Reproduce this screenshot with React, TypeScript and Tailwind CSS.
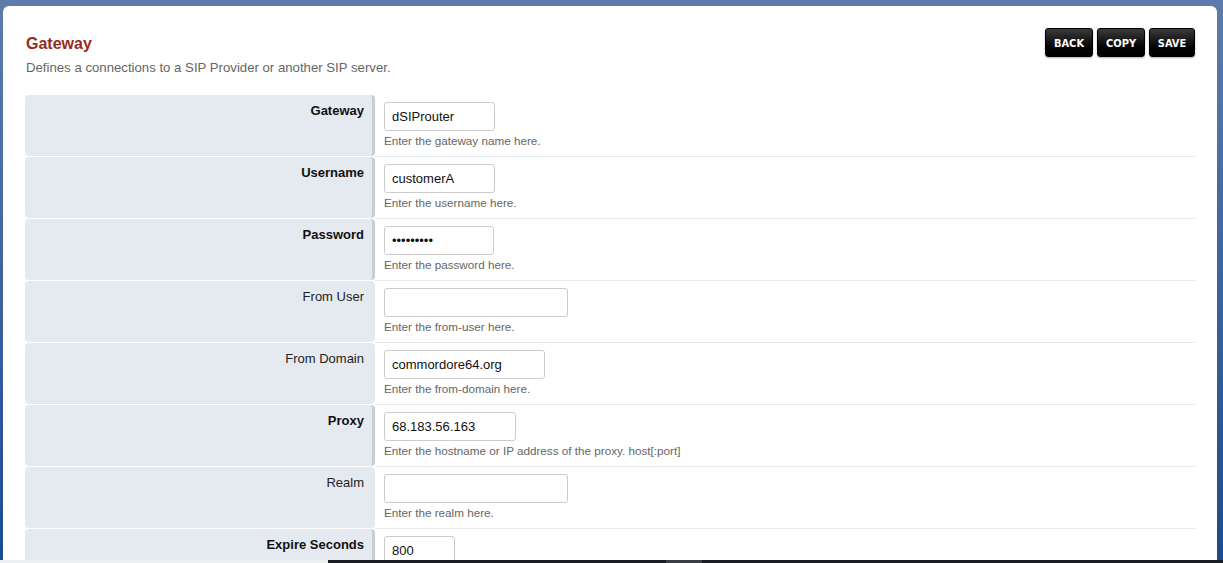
import React from "react";

type Row = {
  label: string;
  required: boolean;
  value: string;
  width: number;
  help: string;
  type?: string;
};

const rows: Row[] = [
  { label: "Gateway", required: true, value: "dSIProuter", width: 111, help: "Enter the gateway name here." },
  { label: "Username", required: true, value: "customerA", width: 111, help: "Enter the username here." },
  { label: "Password", required: true, value: "123456789", width: 110, help: "Enter the password here.", type: "password" },
  { label: "From User", required: false, value: "", width: 184, help: "Enter the from-user here." },
  { label: "From Domain", required: false, value: "commordore64.org", width: 161, help: "Enter the from-domain here." },
  { label: "Proxy", required: true, value: "68.183.56.163", width: 132, help: "Enter the hostname or IP address of the proxy. host[:port]" },
  { label: "Realm", required: false, value: "", width: 184, help: "Enter the realm here." },
  { label: "Expire Seconds", required: true, value: "800", width: 71, help: "" },
];

function Btn({ children, w }: { children: React.ReactNode; w: string }) {
  return (
    <button
      className={`${w} h-[29px] pt-[3px] rounded-[3px] border border-black bg-gradient-to-b from-[#3c3c3c] to-[#000000] text-white text-[11px] font-bold shadow-[0_1px_2px_rgba(0,0,0,0.3)]`}
      style={{ fontFamily: '"DejaVu Sans Condensed", "Liberation Sans", sans-serif' }}
    >
      {children}
    </button>
  );
}

export default function App() {
  return (
    <div
      className="w-[1223px] h-[563px] flex flex-col overflow-hidden bg-gradient-to-b from-[#5d7cac] via-[#3e63a0] to-[#1d4a8e]"
      style={{ fontFamily: '"Liberation Sans", Arial, sans-serif' }}
    >
      <div className="flex-1 min-h-0 pt-[6px] pl-[3px] pr-[6px] overflow-hidden">
        <div className="h-full bg-white rounded-t-[6px] px-[22px] pt-[22px] overflow-hidden">
          <div className="flex justify-between items-start">
            <div className="pt-[6px] pl-[1px]">
              <div className="text-[16px] leading-[19px] font-bold text-[#982a1e]">Gateway</div>
              <div className="mt-[7px] text-[13.2px] leading-[16px] text-[#666666]">
                Defines a connections to a SIP Provider or another SIP server.
              </div>
            </div>
            <div className="flex gap-[4px]">
              <Btn w="w-[48px]">BACK</Btn>
              <Btn w="w-[48px]">COPY</Btn>
              <Btn w="w-[46px]">SAVE</Btn>
            </div>
          </div>

          <div className="mt-[19px] flex flex-col">
            {rows.map((r) => (
              <div key={r.label} className="flex h-[62px]">
                <div
                  className={`w-[350px] h-[61px] shrink-0 bg-[#e5e9f0] rounded-[4px] border-r-[3px] ${
                    r.required ? "border-[#c8ccd3] font-bold text-[#111111]" : "border-[#e5e9f0] text-[#222222]"
                  } text-right pr-[8px] pt-[8px] text-[13px] leading-[16px]`}
                >
                  {r.label}
                </div>
                <div className="flex-1 border-b border-[#e5e9f0] pl-[9px] pt-[7px]">
                  <input
                    type={r.type ?? "text"}
                    defaultValue={r.value}
                    readOnly
                    className="h-[29px] border border-[#cccccc] rounded-[3px] px-[7px] text-[13px] text-[#111111] outline-none bg-white"
                    style={{ width: r.width, fontFamily: '"Liberation Sans", Arial, sans-serif' }}
                  />
                  {r.help && (
                    <div className="mt-[3px] text-[11.7px] leading-[14px] text-[#666666]">{r.help}</div>
                  )}
                </div>
              </div>
            ))}
          </div>
        </div>
      </div>
      <div className="h-[3px] flex shrink-0">
        <div className="w-[328px] bg-[#eceef0]" />
        <div className="flex-1 flex bg-[#1a1d23]">
          <div className="w-[338px]" />
          <div className="w-[36px] bg-[#3b3e44]" />
        </div>
      </div>
    </div>
  );
}
